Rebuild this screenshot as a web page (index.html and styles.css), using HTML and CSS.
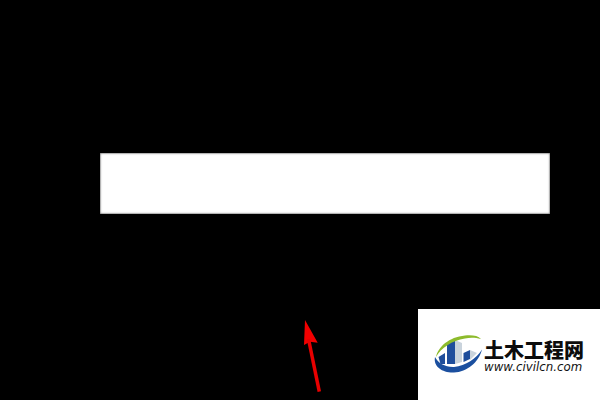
FILE: index.html
```html
<!DOCTYPE html>
<html lang="zh">
<head>
<meta charset="utf-8">
<title>土木工程网</title>
<link rel="stylesheet" href="styles.css">
</head>
<body>
<main class="stage">
  <div class="bar"></div>
  <svg class="arrow" viewBox="0 0 30 80" width="30" height="80" aria-hidden="true">
    <path class="arrow-head" d="M5 1 L17.700 23.700 L10 22.700 L4 26 Z"/>
    <path class="arrow-shaft" d="M8.500 20 L19.300 72.700"/>
  </svg>
  <aside class="logo">
    <svg class="logo-icon" viewBox="0 0 52 40" width="52" height="40" aria-hidden="true">
      <path class="tower-light" d="M21 5 L28 8 V27 L21 29 Z"/>
      <path class="tower-light" d="M36 15 L43 18 L36 25 Z"/>
      <path class="tower-blue" d="M13 8 L21 5 V29 H13 Z"/>
      <path class="tower-blue" d="M4.500 22 L11 18 V29 H6.500 Z"/>
      <path class="tower-blue" d="M29.500 18 L36 15 V24 L29.500 27 Z"/>
      <path class="swoosh-green" d="M2 22 C4 12 15 2 31 0.500 C38 0 44 0.500 47 4 C41 2.500 36 2.500 31 3.500 C18 5.500 7 13 2 22 Z"/>
      <path class="swoosh-blue" d="M1 22 C-1 32 9 38 20 37.500 C33 37 45 27 48 14.500 C42 24 32 30.500 20 32 C11 32.300 4 28 1 22 Z"/>
    </svg>
    <div class="logo-text">
      <div class="logo-name">土木工程网</div>
      <div class="logo-url">www.civilcn.com</div>
    </div>
  </aside>
</main>
</body>
</html>
```
FILE: styles.css
```css
html, body {
  margin: 0;
  padding: 0;
  background: #000;
}

.stage {
  position: relative;
  width: 600px;
  height: 400px;
  overflow: hidden;
  background: #000;
  padding: 153px 50px 0 100px;
  box-sizing: border-box;
}

.bar {
  height: 61px;
  background: #fff;
  box-shadow: inset 0 0 1.500px 0.500px #666;
}

.arrow {
  position: absolute;
  left: 300px;
  top: 319px;
  filter: blur(0.400px);
}

.arrow-head {
  fill: #f20000;
}

.arrow-shaft {
  fill: none;
  stroke: #e80000;
  stroke-width: 3.500;
}

.logo {
  position: absolute;
  left: 418px;
  top: 309px;
  width: 182px;
  height: 91px;
  background: #fff;
  display: flex;
  align-items: flex-start;
  padding: 26px 0 0 16px;
  box-sizing: border-box;
}

.logo-icon {
  overflow: visible;
}

.logo-text {
  margin: 5px 0 0 -2px;
}

.logo-name {
  font-family: "Noto Sans CJK SC", "Noto Sans", sans-serif;
  font-weight: 900;
  font-size: 20px;
  line-height: 20px;
  color: #0c0c0c;
}

.logo-url {
  font-family: "DejaVu Sans", Verdana, sans-serif;
  font-style: italic;
  font-size: 11.800px;
  line-height: 13px;
  margin-top: 1px;
  color: #111;
}

.tower-light {
  fill: #c9d3dc;
}

.tower-blue {
  fill: #1f4e9c;
}

.swoosh-green {
  fill: #8dbb2c;
}

.swoosh-blue {
  fill: #1b4f9f;
}
```
